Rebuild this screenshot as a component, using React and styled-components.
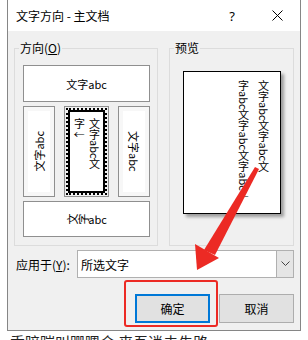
import React from "react";
import styled, { createGlobalStyle } from "styled-components";

const GlobalStyle = createGlobalStyle`
  body {
    margin: 0;
    background: #ffffff;
    font-family: "Noto Sans CJK SC", "Noto Sans", sans-serif;
    font-size: 12px;
    color: #000;
  }
`;

const Page = styled.div`
  position: relative;
  width: 308px;
  height: 340px;
  overflow: hidden;
  background: #ffffff;
`;

const Dialog = styled.div`
  margin-left: 7px;
  width: 292px;
  height: 330px;
  border: 1px solid #868686;
  border-top: none;
  background: #f0f0f0;
  display: flex;
  flex-direction: column;
`;

const TitleBar = styled.div`
  height: 31px;
  background: #ffffff;
  display: flex;
  align-items: center;
  padding-left: 8px;
`;

const Title = styled.span`
  font-size: 12px;
  line-height: 16px;
  flex: 1;
`;

const HelpButton = styled.span`
  width: 30px;
  text-align: center;
  font-family: "Noto Sans", sans-serif;
  font-size: 13px;
`;

const CloseButton = styled.span`
  width: 46px;
  margin-left: 7px;
  display: flex;
  justify-content: center;
`;

const Body = styled.div`
  flex: 1;
  padding: 8px 6px 0 6px;
  display: flex;
  flex-direction: column;
`;

const GroupRow = styled.div`
  display: flex;
  gap: 11px;
`;

const Group = styled.fieldset`
  margin: 0;
  padding: 0;
  width: ${(p) => p.$width}px;
  box-sizing: border-box;
  border: 1px solid #dcdcdc;
  min-inline-size: 0;
`;

const Legend = styled.legend`
  margin-left: 4px;
  padding: 0 1px;
  font-size: 12px;
  line-height: 18px;
`;

const DirectionList = styled.div`
  padding: 8px 7px 8px 8px;
  display: flex;
  flex-direction: column;
  gap: 4px;
`;

const WideOption = styled.div`
  height: ${(p) => p.$height}px;
  box-sizing: border-box;
  border: 1px solid #8f8f8f;
  background: #ffffff;
  display: flex;
  align-items: center;
  justify-content: center;
  font-size: 11px;
`;

const TallRow = styled.div`
  display: flex;
  gap: 9px;
  height: 91px;
`;

const TallOption = styled.div`
  width: 32px;
  box-sizing: border-box;
  border: 1px solid #8f8f8f;
  background: #ffffff;
  box-shadow: inset 0 0 0 4px #f7f7f7;
  display: flex;
  align-items: center;
  justify-content: center;
  font-size: 11px;
`;

const SelectedOption = styled.div`
  width: 45px;
  box-sizing: border-box;
  border: 1px solid #8f8f8f;
  padding: 1px;
  display: flex;
`;

const FocusFrame = styled.div`
  flex: 1;
  border: 2px dotted #000;
  display: flex;
`;

const SelectedInner = styled.div`
  flex: 1;
  border: 2px solid #000;
  background: #ffffff;
  display: flex;
  justify-content: center;
  padding-top: 6px;
  font-size: 11px;
`;

const Upright = styled.span`
  writing-mode: vertical-rl;
  line-height: 15px;
`;

const Sideways = styled.span`
  writing-mode: vertical-rl;
  text-orientation: sideways;
  transform: ${(p) => (p.$up ? "rotate(180deg)" : "none")};
  line-height: 14px;
`;

const TurnedGlyph = styled.span`
  display: inline-block;
  transform: rotate(-90deg);
`;

const Paper = styled.div`
  width: 98px;
  height: 143px;
  box-sizing: border-box;
  margin: 14px auto 0;
  border: 1px solid #000;
  background: #ffffff;
  box-shadow: 3px 3px 3px rgba(0, 0, 0, 0.35);
  display: flex;
  justify-content: flex-end;
  padding: 8px 6px 0 0;
`;

const PreviewText = styled.div`
  writing-mode: vertical-rl;
  font-size: 11px;
  line-height: 20px;
`;

const ApplyRow = styled.div`
  display: flex;
  align-items: center;
  justify-content: space-between;
  margin-top: 4px;
  padding-left: 2px;
`;

const ApplyLabel = styled.span`
  font-size: 12px;
`;

const Select = styled.div`
  width: 217px;
  height: 28px;
  box-sizing: border-box;
  border: 1px solid #b0b0b0;
  background: #ffffff;
  display: flex;
`;

const SelectValue = styled.span`
  flex: 1;
  padding-left: 3px;
  display: flex;
  align-items: center;
  font-size: 12px;
`;

const SelectArrow = styled.span`
  width: 16px;
  background: #e5e5e5;
  border-left: 1px solid #b0b0b0;
  display: flex;
  align-items: center;
  justify-content: center;
`;

const ButtonRow = styled.div`
  display: flex;
  justify-content: flex-end;
  gap: 9px;
  margin-top: 16px;
`;

const ButtonWrap = styled.div`
  position: relative;
`;

const DialogButton = styled.div`
  width: 75px;
  height: 29px;
  box-sizing: border-box;
  border: ${(p) => (p.$primary ? "2px solid #0078d7" : "1px solid #adadad")};
  background: #e1e1e1;
  display: flex;
  align-items: center;
  justify-content: center;
  font-size: 12px;
`;

const Highlight = styled.div`
  position: absolute;
  left: -11px;
  right: -8px;
  top: -14px;
  bottom: -4px;
  border: 2px solid #ec2a24;
  border-radius: 3px;
`;

const DocLine = styled.div`
  margin-left: 10px;
  margin-top: 1px;
  font-size: 15px;
  line-height: 20px;
  color: #222;
  white-space: nowrap;
`;

const Overlay = styled.svg`
  position: absolute;
  left: 0;
  top: 0;
  pointer-events: none;
`;

export default function App() {
  return (
    <Page>
      <GlobalStyle />
      <Dialog>
        <TitleBar>
          <Title>文字方向 - 主文档</Title>
          <HelpButton>?</HelpButton>
          <CloseButton>
            <svg width="11" height="11" viewBox="0 0 11 11">
              <path d="M0.5 0.5 L10.5 10.5 M10.5 0.5 L0.5 10.5" stroke="#000" strokeWidth="1" />
            </svg>
          </CloseButton>
        </TitleBar>
        <Body>
          <GroupRow>
            <Group $width={144}>
              <Legend>
                方向(<u>O</u>)
              </Legend>
              <DirectionList>
                <WideOption $height={37}>文字abc</WideOption>
                <TallRow>
                  <TallOption>
                    <Sideways $up>文字abc</Sideways>
                  </TallOption>
                  <SelectedOption>
                    <FocusFrame>
                      <SelectedInner>
                        <Upright>
                          文字abc文
                          <br />字↓
                        </Upright>
                      </SelectedInner>
                    </FocusFrame>
                  </SelectedOption>
                  <TallOption>
                    <Sideways>文字abc</Sideways>
                  </TallOption>
                </TallRow>
                <WideOption $height={36}>
                  <TurnedGlyph>文</TurnedGlyph>
                  <TurnedGlyph>字</TurnedGlyph>abc
                </WideOption>
              </DirectionList>
            </Group>
            <Group $width={125}>
              <Legend>预览</Legend>
              <Paper>
                <PreviewText>
                  文字abc文字abc文
                  <br />
                  字abc文字abc文字abc↓
                </PreviewText>
              </Paper>
            </Group>
          </GroupRow>
          <ApplyRow>
            <ApplyLabel>
              应用于(<u>Y</u>):
            </ApplyLabel>
            <Select>
              <SelectValue>所选文字</SelectValue>
              <SelectArrow>
                <svg width="9" height="6" viewBox="0 0 9 6">
                  <path d="M0.5 0.5 L4.5 4.5 L8.5 0.5" fill="none" stroke="#444" strokeWidth="1" />
                </svg>
              </SelectArrow>
            </Select>
          </ApplyRow>
          <ButtonRow>
            <ButtonWrap>
              <DialogButton $primary>确定</DialogButton>
              <Highlight />
            </ButtonWrap>
            <DialogButton>取消</DialogButton>
          </ButtonRow>
        </Body>
      </Dialog>
      <DocLine>乘暗蹦叫跚嗯会 来吾逍去先路</DocLine>
      <Overlay width="308" height="340" viewBox="0 0 308 340">
        <polygon points="255,167 259,169 215,255 204,250" fill="#ec2a24" />
        <polygon points="195,244 197,270 219,258" fill="#ec2a24" />
      </Overlay>
    </Page>
  );
}
